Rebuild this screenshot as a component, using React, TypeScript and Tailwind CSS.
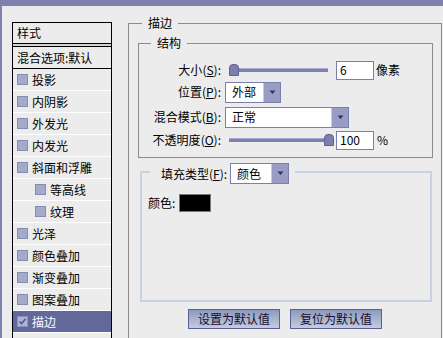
import React from "react";

const FONT = "font-['Noto_Sans_CJK_SC','Noto_Sans',sans-serif]";

function Check({ checked }: { checked?: boolean }) {
  return (
    <div
      className={
        checked
          ? "flex h-[11px] w-[11px] shrink-0 items-center justify-center border border-[#8e93bb] bg-[#aeb3d0]"
          : "h-[11px] w-[11px] shrink-0 border border-[#868bb4] bg-[#a4aac9]"
      }
    >
      {checked && (
        <svg width="9" height="9" viewBox="0 0 9 9">
          <path d="M1.5 4.5 L3.5 6.5 L7.5 2" stroke="#50558f" strokeWidth="1.6" fill="none" />
        </svg>
      )}
    </div>
  );
}

function Item({ label, indent, selected }: { label: string; indent?: boolean; selected?: boolean }) {
  return (
    <div
      className={
        selected
          ? "flex h-[22px] items-center gap-[4px] border-b border-white bg-[#63689b] pl-[4px] text-white"
          : "flex h-[22px] items-center gap-[4px] border-b border-white pl-[4px] text-black"
      }
    >
      {indent && <div className="w-[14px] shrink-0" />}
      <Check checked={selected} />
      <span className="leading-none">{label}</span>
    </div>
  );
}

function Select({ value, className }: { value: string; className: string }) {
  return (
    <div className={`flex h-[21px] border border-[#7b7fab] bg-white ${className}`}>
      <div className="flex flex-1 items-center pl-[6px] text-[12px] leading-none">{value}</div>
      <div className="w-px bg-[#c3cfdc]" />
      <div className="flex w-[16px] items-center justify-center bg-[#9a9dc3]">
        <svg width="7" height="5" viewBox="0 0 7 5">
          <path d="M0.5 0.5 L3.5 4 L6.5 0.5 Z" fill="#2d326e" />
        </svg>
      </div>
    </div>
  );
}

function Thumb() {
  return <div className="h-[12px] w-[10px] shrink-0 rounded-t-[4px] border border-[#5f6392] bg-[#7c80ae]" />;
}

function Track({ className }: { className: string }) {
  return <div className={`h-[4px] border-t border-[#a5a8cb] bg-[#7d81b0] ${className}`} />;
}

function Input({ value }: { value: string }) {
  return (
    <div className="flex h-[19px] w-[38px] items-center border border-[#7b7fab] bg-white pl-[3px] text-[12px] leading-none">
      {value}
    </div>
  );
}

function Key({ k }: { k: string }) {
  return (
    <>
      (<span className="underline">{k}</span>):
    </>
  );
}

export default function App() {
  return (
    <div
      className={`flex h-[338px] w-[443px] overflow-hidden border-l-2 border-t-[6px] border-[#7f82ad] bg-[#ececec] text-[12px] text-black ${FONT}`}
    >
      {/* Left styles list */}
      <div className="ml-[10px] mt-[16px] flex h-[340px] w-[100px] shrink-0 flex-col border border-black">
        <div className="flex h-[21px] items-center border-b border-black pl-[4px] leading-none">样式</div>
        <div className="h-[2px] bg-[#d4d4d4]" />
        <div className="flex h-[23px] items-center border-y border-black pl-[4px] leading-none">混合选项:默认</div>
        <Item label="投影" />
        <Item label="内阴影" />
        <Item label="外发光" />
        <Item label="内发光" />
        <Item label="斜面和浮雕" />
        <Item label="等高线" indent />
        <Item label="纹理" indent />
        <Item label="光泽" />
        <Item label="颜色叠加" />
        <Item label="渐变叠加" />
        <Item label="图案叠加" />
        <Item label="描边" selected />
      </div>

      {/* Right panel: 描边 */}
      <div className="relative ml-[16px] mt-[17px] flex h-[340px] w-[314px] shrink-0 flex-col border border-[#8c8c8c]">
        <span className="absolute left-[13px] top-[-9px] bg-[#ececec] px-[6px] leading-[16px]">描边</span>

        {/* 结构 */}
        <div className="relative ml-[9px] mr-[8px] mt-[19px] flex h-[115px] flex-col border border-[#8c8c8c]">
          <span className="absolute left-[12px] top-[-9px] bg-[#ececec] px-[6px] leading-[16px]">结构</span>

          <div className="mt-[15px] flex h-[22px] items-center">
            <div className="w-[82px] text-right leading-none">
              大小<Key k="S" />
            </div>
            <div className="ml-[8px] flex w-[99px] items-center">
              <Thumb />
              <Track className="flex-1" />
            </div>
            <div className="ml-[8px]">
              <Input value="6" />
            </div>
            <span className="ml-[2px] leading-none">像素</span>
          </div>

          <div className="flex h-[22px] items-center">
            <div className="w-[82px] text-right leading-none">
              位置<Key k="P" />
            </div>
            <Select value="外部" className="ml-[4px] w-[56px]" />
          </div>

          <div className="mt-[3px] flex h-[22px] items-center">
            <div className="w-[82px] text-right leading-none">
              混合模式<Key k="B" />
            </div>
            <Select value="正常" className="ml-[4px] w-[124px]" />
          </div>

          <div className="mt-[1px] flex h-[22px] items-center">
            <div className="w-[82px] text-right leading-none">
              不透明度<Key k="O" />
            </div>
            <div className="ml-[8px] flex w-[105px] items-center">
              <Track className="flex-1" />
              <Thumb />
            </div>
            <div className="ml-[2px]">
              <Input value="100" />
            </div>
            <span className="ml-[3px] leading-none">%</span>
          </div>
        </div>

        {/* 填充类型 */}
        <div className="relative ml-[11px] mr-[9px] mt-[13px] h-[131px] border-2 border-[#c8d2e2]">
          <div className="absolute left-[8px] top-[-10px] flex h-[21px] items-center bg-[#ececec] pl-[11px] pr-[6px]">
            <span className="leading-none">
              填充类型<Key k="F" />
            </span>
            <Select value="颜色" className="ml-[3px] w-[59px]" />
          </div>
          <div className="ml-[6px] mt-[21px] flex items-center">
            <span className="leading-none">颜色:</span>
            <div className="ml-[4px] h-[18px] w-[32px] border border-[#7a7a7a] bg-black" />
          </div>
        </div>

        {/* Buttons */}
        <div className="mt-[7px] flex justify-center gap-[10px]">
          <button className="flex h-[20px] w-[92px] items-center justify-center border border-[#5b5f98] bg-linear-to-b from-[#8c9abd] to-[#c4cddf] text-[12px] leading-none text-[#1a0a2e]">
            设置为默认值
          </button>
          <button className="flex h-[20px] w-[92px] items-center justify-center border border-[#5b5f98] bg-linear-to-b from-[#8c9abd] to-[#c4cddf] text-[12px] leading-none text-[#1a0a2e]">
            复位为默认值
          </button>
        </div>
      </div>
    </div>
  );
}
